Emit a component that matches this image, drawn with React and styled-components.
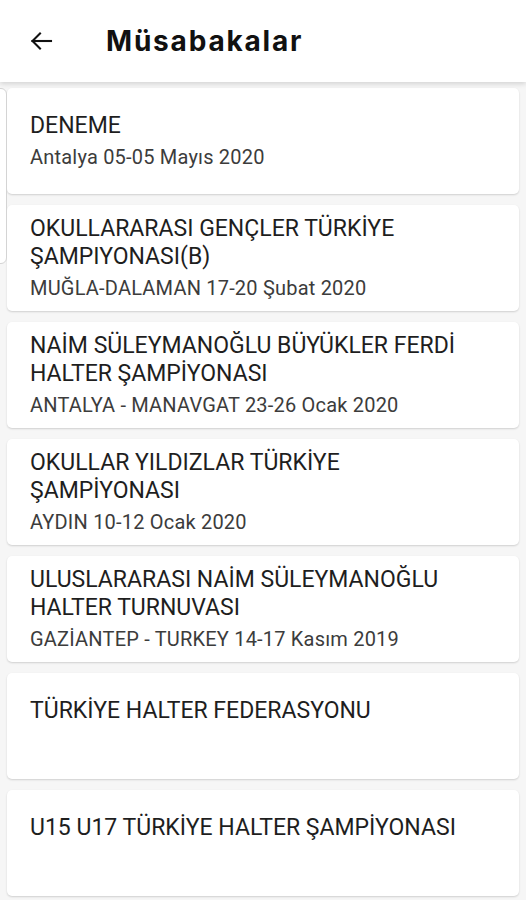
import React from "react";
import styled, { createGlobalStyle } from "styled-components";

const GlobalStyle = createGlobalStyle`
  html, body {
    margin: 0;
    padding: 0;
    background: #f6f6f6;
  }
  body {
    font-family: Roboto, "Noto Sans", sans-serif;
  }
`;

const Screen = styled.div`
  width: 526px;
  height: 900px;
  overflow: hidden;
  position: relative;
  background: #f6f6f6;
`;

const Header = styled.header`
  height: 82px;
  display: flex;
  align-items: center;
  background: #ffffff;
  box-shadow: 0 2px 5px rgba(0, 0, 0, 0.14);
  position: relative;
  z-index: 2;
`;

const BackButton = styled.button`
  width: 24px;
  height: 24px;
  margin-left: 29px;
  padding: 0;
  border: none;
  background: none;
  display: flex;
  align-items: center;
  justify-content: center;
  color: #111;
`;

const Title = styled.h1`
  margin: 0 0 0 53px;
  font-family: Inter, "Noto Sans", sans-serif;
  font-weight: 700;
  font-size: 28px;
  letter-spacing: 1.8px;
  color: #111;
`;

const List = styled.div`
  display: flex;
  flex-direction: column;
  gap: 11px;
  padding: 6px 7px 0;
`;

const Card = styled.div`
  height: 106px;
  box-sizing: border-box;
  display: flex;
  flex-direction: column;
  justify-content: center;
  padding: 0 30px 0 23px;
  background: #ffffff;
  border-radius: 5px;
  box-shadow: 0 1px 2px rgba(0, 0, 0, 0.16);
`;

const CardTitle = styled.div`
  font-size: 23px;
  line-height: 28px;
  color: #1e1e1e;
`;

const CardSub = styled.div`
  margin-top: 4px;
  font-size: 20px;
  line-height: 26px;
  min-height: 26px;
  letter-spacing: 0.2px;
  color: #3c3c3c;
`;

const EdgePeek = styled.div`
  position: absolute;
  left: -12px;
  top: 88px;
  width: 17px;
  height: 174px;
  border: 1px solid #d4d4d4;
  border-radius: 6px;
  background: #ffffff;
  z-index: 1;
`;

const events = [
  { title: "DENEME", sub: "Antalya 05-05 Mayıs 2020" },
  { title: "OKULLARARASI GENÇLER TÜRKİYE ŞAMPIYONASI(B)", sub: "MUĞLA-DALAMAN 17-20 Şubat 2020" },
  { title: "NAİM SÜLEYMANOĞLU BÜYÜKLER FERDİ HALTER ŞAMPİYONASI", sub: "ANTALYA - MANAVGAT 23-26 Ocak 2020" },
  { title: "OKULLAR YILDIZLAR TÜRKİYE ŞAMPİYONASI", sub: "AYDIN 10-12 Ocak 2020" },
  { title: "ULUSLARARASI NAİM SÜLEYMANOĞLU HALTER TURNUVASI", sub: "GAZİANTEP - TURKEY 14-17 Kasım 2019" },
  { title: "TÜRKİYE HALTER FEDERASYONU", sub: "" },
  { title: "U15 U17 TÜRKİYE HALTER ŞAMPİYONASI", sub: "" }
];

const BackArrow = () => (
  <svg width="24" height="24" viewBox="0 0 24 24" fill="none" stroke="currentColor" strokeWidth="2.1" strokeLinecap="square">
    <path d="M22 12H3.5" />
    <path d="M11 4.5L3.5 12l7.5 7.5" />
  </svg>
);

export default function App() {
  return (
    <Screen>
      <GlobalStyle />
      <Header>
        <BackButton aria-label="Geri">
          <BackArrow />
        </BackButton>
        <Title>Müsabakalar</Title>
      </Header>
      <EdgePeek />
      <List>
        {events.map(e => (
          <Card key={e.title}>
            <CardTitle>{e.title}</CardTitle>
            <CardSub>{e.sub}</CardSub>
          </Card>
        ))}
      </List>
    </Screen>
  );
}
